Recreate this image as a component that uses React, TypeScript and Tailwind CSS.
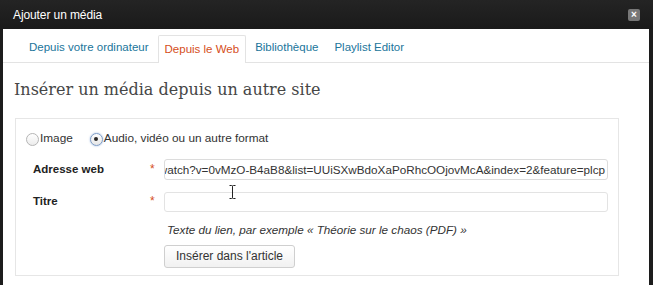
import React from "react";

const tabs = [
  { label: "Depuis votre ordinateur", active: false },
  { label: "Depuis le Web", active: true },
  { label: "Bibliothèque", active: false },
  { label: "Playlist Editor", active: false },
];

const Radio = ({ checked, label }: { checked?: boolean; label: string }) => (
  <label className="flex items-center gap-[1px] text-[11.8px] text-[#333]">
    <span
      className={
        checked
          ? "w-[13px] h-[13px] rounded-full border border-[#7e9cc6] bg-gradient-to-b from-white to-[#e6e6e6] flex items-center justify-center shadow-[0_0_2px_rgba(80,130,200,0.6)]"
          : "w-[13px] h-[13px] rounded-full border border-[#b5b5b5] bg-gradient-to-b from-white to-[#ececec]"
      }
    >
      {checked && <span className="w-[4px] h-[4px] rounded-full bg-[#2a2a2a]" />}
    </span>
    <span>{label}</span>
  </label>
);

const Row = ({ label, children, className = "" }: { label?: string; children: React.ReactNode; className?: string }) => (
  <div className={`flex items-center ${className}`}>
    <span className="w-[117px] shrink-0 text-[11.5px] font-bold text-[#222]">{label}</span>
    <span className="w-[14px] shrink-0 text-[12px] text-[#d54e21] -mt-[2px]">{label ? "*" : ""}</span>
    <div className="flex-1 min-w-0">{children}</div>
  </div>
);

const App = () => {
  return (
    <div className="w-[653px] h-[285px] bg-[#1c1c1c] flex flex-col overflow-hidden font-['Liberation_Sans',Arial,sans-serif]">
      {/* Title bar */}
      <div className="h-[29px] shrink-0 flex items-center justify-between pl-[13px] pr-[13px] bg-gradient-to-b from-[#242424] to-[#1a1a1a]">
        <span className="text-white text-[12px] tracking-[-0.1px]">Ajouter un média</span>
        <span className="w-[12px] h-[12px] rounded-[2px] bg-[#777] flex items-center justify-center text-white text-[10px] leading-none font-bold">
          ×
        </span>
      </div>

      <div className="flex-1 ml-[3px] mr-[4px] bg-white flex flex-col relative">
        {/* Tabs */}
        <div className="h-[34px] shrink-0 flex items-end pl-[19px] gap-[2px] border-b border-[#e3e3e3]">
          {tabs.map((t) =>
            t.active ? (
              <div
                key={t.label}
                className="h-[28px] -mb-px px-[6px] flex items-center text-[11.5px] text-[#d54e21] bg-white border border-b-0 border-[#e3e3e3] rounded-t-[2px]"
              >
                {t.label}
              </div>
            ) : (
              <div key={t.label} className="h-[28px] px-[7px] flex items-center text-[11.5px] text-[#21759b]">
                {t.label}
              </div>
            )
          )}
        </div>

        {/* Heading */}
        <h2 className="pl-[11px] mt-[16px] text-[16px] leading-[22px] text-[#464646] font-['DejaVu_Serif',Georgia,serif]">
          Insérer un média depuis un autre site
        </h2>

        {/* Form box */}
        <div className="ml-[12px] mr-[30px] mt-[17px] border border-[#e6e6e6] pl-[10px] pr-[10px] pt-[12px] pb-[7px]">
          <div className="flex items-center gap-[17px] h-[16px]">
            <Radio label="Image" />
            <Radio checked label="Audio, vidéo ou un autre format" />
          </div>

          <div className="pl-[7px]">
            <Row label="Adresse web" className="mt-[12px]">
              <div className="h-[21px] border border-[#dcdcdc] rounded-[3px] flex items-center justify-end overflow-hidden pr-[2px]">
                <span className="whitespace-nowrap text-[11.7px] text-[#333]">
                  http://www.youtube.com/watch?v=0vMzO-B4aB8&amp;list=UUiSXwBdoXaPoRhcOOjovMcA&amp;index=2&amp;feature=plcp
                </span>
              </div>
            </Row>

            <Row label="Titre" className="mt-[12px]">
              <div className="h-[20px] border border-[#e3e3e3] rounded-[3px]" />
            </Row>

            <Row className="mt-[11px]">
              <p className="text-[11.7px] leading-[14px] italic text-[#333] pl-[3px]">
                Texte du lien, par exemple « Théorie sur le chaos (PDF) »
              </p>
            </Row>

            <Row className="mt-[6px]">
              <button className="h-[23px] px-[11px] border border-[#cfcfcf] rounded-[3px] bg-gradient-to-b from-white to-[#f1f1f1] text-[12px] text-[#333]">
                Insérer dans l'article
              </button>
            </Row>
          </div>
        </div>

        {/* Mouse cursor (I-beam) */}
        <svg className="absolute left-[226px] top-[156px]" width="7" height="14" viewBox="0 0 7 14">
          <path d="M0.5 0.5 H2.5 Q3.5 0.5 3.5 1.5 V12.5 Q3.5 13.5 2.5 13.5 H0.5 M6.5 0.5 H4.5 Q3.5 0.5 3.5 1.5 M3.5 12.5 Q3.5 13.5 4.5 13.5 H6.5" stroke="#222" strokeWidth="1" fill="none" />
        </svg>
      </div>
    </div>
  );
};

export default App;
